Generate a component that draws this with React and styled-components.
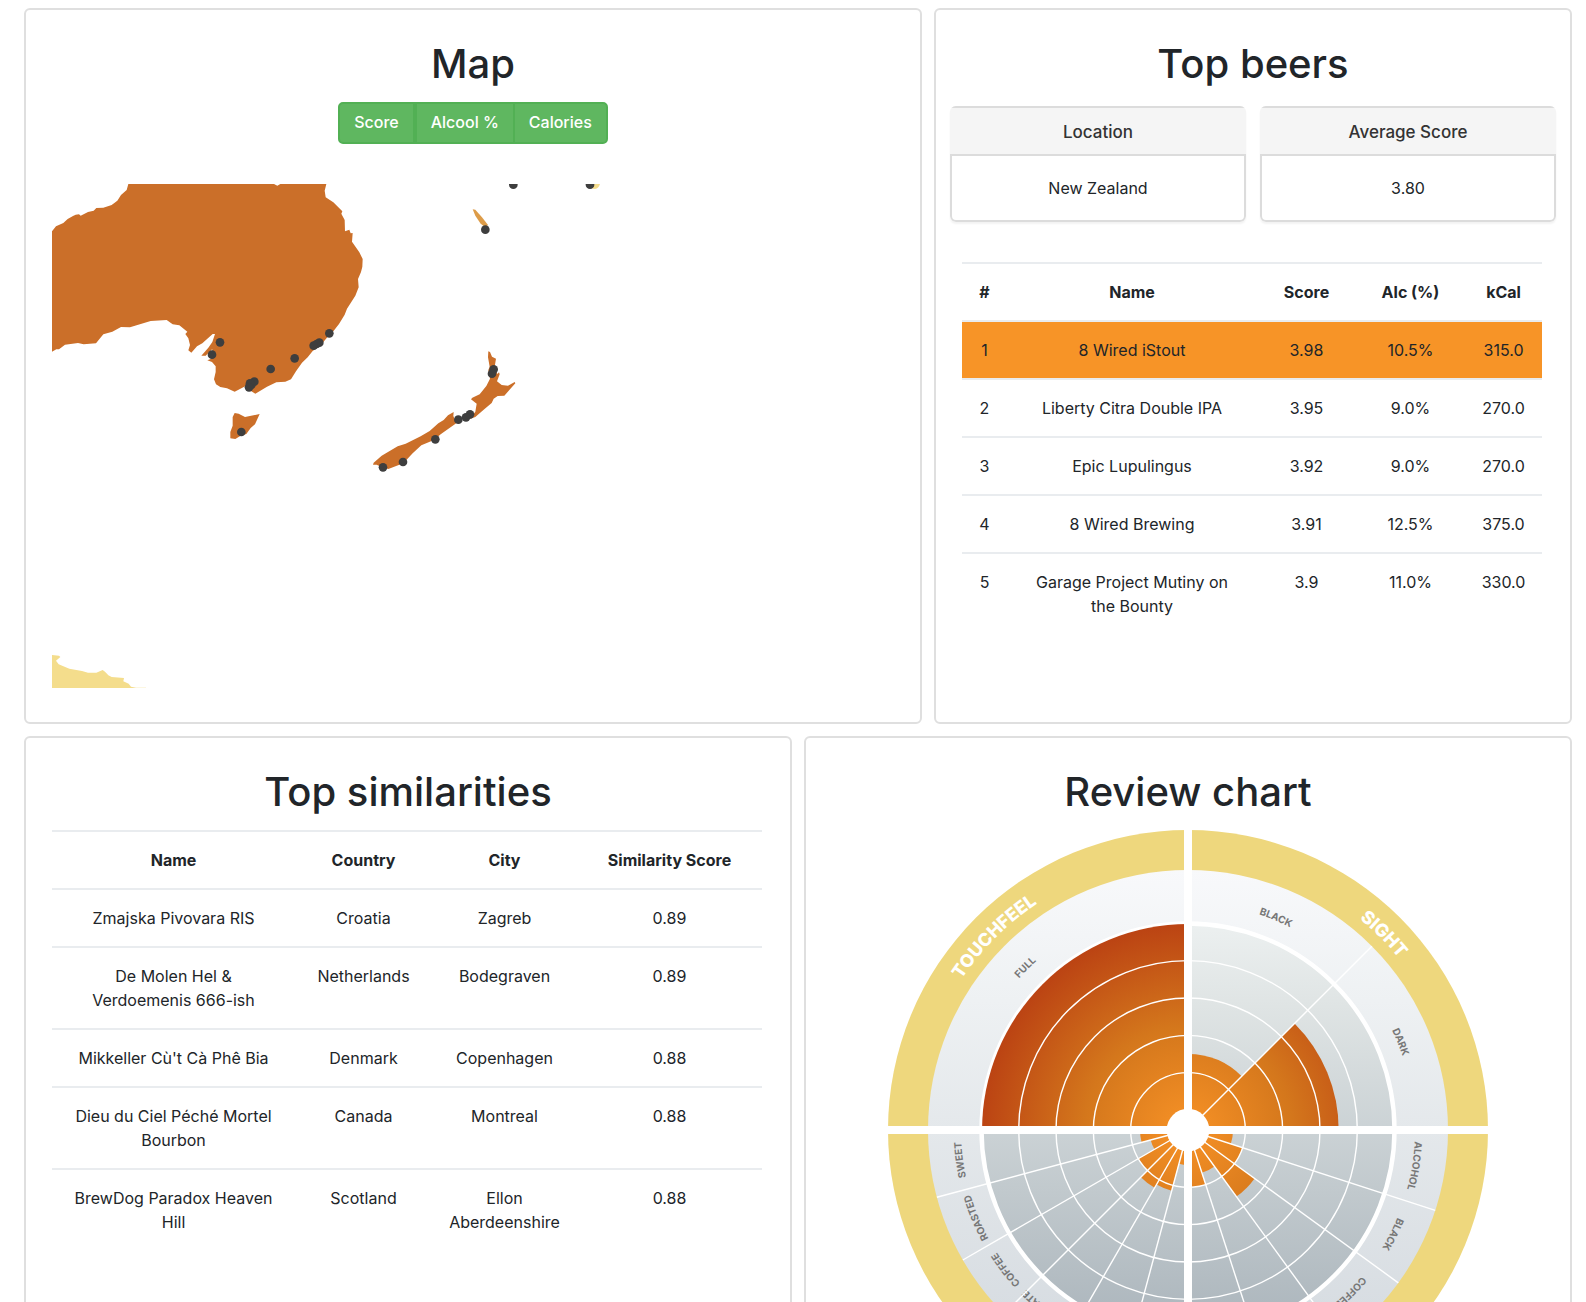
import React from "react";
import styled, { createGlobalStyle } from "styled-components";

const GlobalStyle = createGlobalStyle`
  *, *::before, *::after { box-sizing: border-box; }
  body {
    margin: 0;
    background: #fff;
    color: #212529;
    font-family: Inter, "Liberation Sans", sans-serif;
    font-size: 16px;
    line-height: 24px;
  }
`;

const Dashboard = styled.main`
  display: grid;
  grid-template-columns: repeat(12, minmax(0, 1fr));
  gap: 12px;
  padding: 8px 14px 12px 24px;
`;

const Panel = styled.section`
  grid-column: span ${(p) => p.$span};
  border: 2px solid #dfdfdf;
  border-radius: 6px;
  padding: 30px 0 34px;
`;

const Title = styled.h2`
  margin: 0 0 14px;
  font-size: 40px;
  font-weight: 500;
  line-height: 48px;
  text-align: center;
`;

const Content = styled.div`
  padding: 0 28px 0 26px;
`;

const ButtonGroup = styled.div`
  display: flex;
  justify-content: center;
  margin-bottom: 40px;
`;

const GroupButton = styled.button`
  height: 42px;
  padding: 0 14px 2px;
  border: 2px solid #52b054;
  background: #5fb760;
  color: #fff;
  font: inherit;
  font-weight: 500;
  cursor: pointer;

  &:first-child { border-radius: 5px 0 0 5px; }
  &:last-child { border-radius: 0 5px 5px 0; margin-left: -2px; }
`;

const MapDrawing = styled.svg`
  display: block;
  width: 100%;
  height: auto;
`;

const Cards = styled.div`
  display: grid;
  grid-template-columns: 1fr 1fr;
  gap: 14px;
  padding: 4px 14px 0;
  margin-bottom: 40px;
`;

const Card = styled.div`
  border-radius: 6px;
  background: #f5f5f5;
  box-shadow: 0 2px 2px rgba(0, 0, 0, 0.05);
  text-align: center;
  overflow: hidden;
`;

const CardHeader = styled.h3`
  margin: 0;
  padding: 12px 8px 10px;
  border-top: 2px solid #dcdcdc;
  color: #333;
  font-size: 17px;
  font-weight: 500;
  line-height: 24px;
`;

const CardBody = styled.p`
  margin: 0;
  padding: 20px 8px;
  border: 2px solid #dcdcdc;
  border-radius: 0 0 6px 6px;
  background: #fff;
`;

const Table = styled.table`
  width: 100%;
  table-layout: fixed;
  border-collapse: separate;
  border-spacing: 0;
  text-align: center;
`;

const Column = styled.col`
  width: ${(p) => (p.$width ? `${p.$width}px` : "auto")};
`;

const HeadCell = styled.th`
  padding: 16px 0;
  border-top: 2px solid #e9ecef;
  border-bottom: 2px solid #e9ecef;
  font-weight: 700;
`;

const Row = styled.tr`
  background: ${(p) => (p.$active ? "#f79427" : "transparent")};
`;

const Cell = styled.td`
  padding: 16px ${(p) => (p.$wide ? 20 : 8)}px;
  border-bottom: 2px solid #e9ecef;
  vertical-align: top;

  ${Row}:last-child & { border-bottom: 0; }
`;

const Chart = styled.svg`
  display: block;
  width: 100%;
  max-width: 600px;
  height: auto;
  margin: 0 auto;
`;

const SectorName = styled.text`
  fill: #fff;
  font-size: 18px;
  font-weight: 800;
  text-anchor: middle;
`;

const FlavourName = styled.text`
  fill: #777;
  font-size: 10px;
  font-weight: 700;
  text-anchor: middle;
`;

const beerColumns = [
  { label: "#", width: 45 },
  { label: "Name", wide: true },
  { label: "Score", width: 99 },
  { label: "Alc (%)", width: 109 },
  { label: "kCal", width: 77 },
];

const beers = [
  ["1", "8 Wired iStout", "3.98", "10.5%", "315.0"],
  ["2", "Liberty Citra Double IPA", "3.95", "9.0%", "270.0"],
  ["3", "Epic Lupulingus", "3.92", "9.0%", "270.0"],
  ["4", "8 Wired Brewing", "3.91", "12.5%", "375.0"],
  ["5", "Garage Project Mutiny on the Bounty", "3.9", "11.0%", "330.0"],
];

const similarityColumns = [
  { label: "Name", wide: true },
  { label: "Country", width: 137 },
  { label: "City", width: 145 },
  { label: "Similarity Score", width: 185 },
];

const similarities = [
  ["Zmajska Pivovara RIS", "Croatia", "Zagreb", "0.89"],
  ["De Molen Hel & Verdoemenis 666-ish", "Netherlands", "Bodegraven", "0.89"],
  ["Mikkeller Cù't Cà Phê Bia", "Denmark", "Copenhagen", "0.88"],
  ["Dieu du Ciel Péché Mortel Bourbon", "Canada", "Montreal", "0.88"],
  ["BrewDog Paradox Heaven Hill", "Scotland", "Ellon Aberdeenshire", "0.88"],
];

function DataTable({ columns, rows, activeIndex }) {
  return (
    <Table>
      <colgroup>
        {columns.map((c) => (
          <Column key={c.label} $width={c.width} />
        ))}
      </colgroup>
      <thead>
        <tr>
          {columns.map((c) => (
            <HeadCell key={c.label} scope="col">{c.label}</HeadCell>
          ))}
        </tr>
      </thead>
      <tbody>
        {rows.map((row, i) => (
          <Row key={row[0]} $active={i === activeIndex}>
            {row.map((value, j) => (
              <Cell key={columns[j].label} $wide={columns[j].wide}>{value}</Cell>
            ))}
          </Row>
        ))}
      </tbody>
    </Table>
  );
}

const australia =
  "M36 184L48 169L70 159L83 147L99 138L107 134L117 133L122 137L144 126L161 122L169 114L190 113L215 105L232 92L243 75L260 60L265 42L702 42L712 47L721 42L859 42L854 62L857 82L880 97L907 124L904 131L914 150L915 184L928 179L932 190L938 189L936 215L958 247L968 267L967 290L963 306L954 327L956 352L946 377L921 416L914 434L897 462L880 484L862 502L840 528L818 543L803 562L786 578L768 604L753 628L736 635L709 637L681 650L646 671L634 664L625 655L617 648L584 665L561 655L541 651L528 643L522 628L527 606L527 589L516 576L502 571L514 566L517 537L497 557L484 557L505 533L517 516L525 492L518 492L487 520L471 529L454 548L445 541L450 525L445 505L436 492L442 485L418 466L398 463L380 450L332 453L270 472L243 471L217 485L190 493L168 520L131 523L114 519L75 524L57 538L49 538L36 545Z";

const tasmania =
  "M584 729L596 731L615 741L659 732L645 763L632 774L619 792L602 797L586 807L571 805L571 786L578 767L578 741Z";

const newZealand = [
  "M385 544L390 546L396 560L408 566L404 590L412 612L417 607L419 613L411 634L425 645L444 647L464 636L466 640L433 677L413 678L401 686L395 699L371 719L346 741L328 748L346 725L350 701L333 688L337 683L359 673L379 648L390 626L385 600L389 590L384 562Z",
  "M281 726L280 738L284 748L294 756L242 793L222 810L184 826L158 850L130 880L85 897L66 892L50 884L39 884L41 878L65 857L113 829L137 821L182 799L209 783L235 760L251 750L264 736Z",
];

const antarctica =
  "M156 45L177 47L181 51L168 62L176 73L208 86L246 93L264 98L289 98L308 90L315 95L325 106L335 111L372 114L370 124L386 131L393 140L408 143L438 143V144H156Z";

const breweries = [
  [540, 517], [516, 554], [868, 490], [838, 518], [830, 522], [821, 527],
  [764, 565], [692, 597], [643, 635], [630, 640], [634, 645], [627, 652], [604, 786],
  [1420, 44], [1650, 44], [1336, 179],
  [1361, 598], [1356, 611], [1290, 733], [1278, 742], [1255, 749],
  [1186, 808], [1089, 876], [1029, 892],
];

function BreweryMap() {
  return (
    <MapDrawing viewBox="36 42 2520 1512" role="img" aria-label="Breweries by country">
      <g fill="#cb6f29">
        <path d={australia} />
        <path d={tasmania} />
        <g transform="translate(960 0)">
          {newZealand.map((d) => (
            <path key={d} d={d} />
          ))}
        </g>
      </g>
      <path
        d="M338 118L346 119L366 142L384 165L376 172L362 161L346 137Z"
        transform="translate(960 0)"
        fill="#dd9c48"
      />
      <path d="M1650 42H1680Q1676 57 1662 57L1650 54Z" fill="#f5dd8d" />
      <path d={antarctica} transform="translate(-120 1410)" fill="#f4dd8c" />
      {breweries.map(([x, y]) => (
        <circle key={`${x}-${y}`} cx={x} cy={y} r="13" fill="#3e3e3e" />
      ))}
    </MapDrawing>
  );
}

// Angles are in degrees, clockwise, starting from the bottom of the wheel.
const sectors = [
  {
    start: 0,
    values: [0.4, 1.15, 1.25, 1, 0.5, 0.75],
    labels: ["", "", "CHOCOLATE", "COFFEE", "ROASTED", "SWEET"],
  },
  { name: "TOUCHFEEL", start: 90, values: [4.98], labels: ["FULL"] },
  { name: "SIGHT", start: 180, values: [1.5, 3.5], labels: ["BLACK", "DARK"] },
  {
    start: 270,
    values: [0.67, 1, 1.67, 0.67, 1],
    labels: ["ALCOHOL", "BLACK", "COFFEE", "", ""],
  },
];

const HUB = 20;
const STEP = 112 / 3;

const radiusOf = (value) => HUB + value * STEP;

const pointAt = (angle, radius) => {
  const a = (angle * Math.PI) / 180;
  return [300 - radius * Math.sin(a), 300 + radius * Math.cos(a)];
};

const wedge = (from, to, radius) => {
  const [x1, y1] = pointAt(from, radius);
  const [x2, y2] = pointAt(to, radius);
  return `M300 300L${x1} ${y1}A${radius} ${radius} 0 0 1 ${x2} ${y2}Z`;
};

const circlePath = (r) =>
  `M300 ${300 + r}A${r} ${r} 0 0 1 300 ${300 - r}A${r} ${r} 0 0 1 300 ${300 + r}`;

const slices = sectors.flatMap((s) => {
  const size = 90 / s.values.length;
  return s.values.map((value, i) => ({
    value,
    label: s.labels[i],
    from: s.start + i * size,
    to: s.start + (i + 1) * size,
  }));
});

function ReviewChart() {
  return (
    <Chart viewBox="0 0 600 600" role="img" aria-label="Review chart">
      <defs>
        <linearGradient id="ring" gradientUnits="userSpaceOnUse" x1="0" y1="40" x2="0" y2="560">
          <stop offset="0" stopColor="#f8f9fb" />
          <stop offset="0.25" stopColor="#eef1f3" />
          <stop offset="0.5" stopColor="#e4e8eb" />
          <stop offset="1" stopColor="#d2d8de" />
        </linearGradient>
        <linearGradient id="disc" gradientUnits="userSpaceOnUse" x1="0" y1="94" x2="0" y2="506">
          <stop offset="0" stopColor="#ecf0f0" />
          <stop offset="0.2" stopColor="#dfe4e4" />
          <stop offset="0.5" stopColor="#cbd2d5" />
          <stop offset="0.65" stopColor="#c1c9cd" />
          <stop offset="1" stopColor="#aab4bb" />
        </linearGradient>
        <radialGradient id="heat" gradientUnits="userSpaceOnUse" cx="300" cy="300" r="207">
          <stop offset="0" stopColor="#f79226" />
          <stop offset="0.5" stopColor="#d4771c" />
          <stop offset="1" stopColor="#bb4313" />
        </radialGradient>
        <path id="sectorArc" d={circlePath(272)} />
        <path id="flavourArc" d={circlePath(227)} />
      </defs>

      <circle cx="300" cy="300" r="300" fill="#eed77d" />
      <circle cx="300" cy="300" r="260" fill="url(#ring)" />
      <circle cx="300" cy="300" r="206.5" fill="url(#disc)" stroke="#fff" strokeWidth="4.4" />

      {slices.map((s) => (
        <path key={s.from} d={wedge(s.from, s.to, radiusOf(s.value))} fill="url(#heat)" />
      ))}

      {sectors.filter((s) => s.name).map((s) => (
        <SectorName key={s.name}>
          <textPath href="#sectorArc" startOffset={`${((s.start + 45) / 360) * 100}%`}>
            {s.name}
          </textPath>
        </SectorName>
      ))}
      {slices.filter((s) => s.label).map((s) => (
        <FlavourName key={s.from}>
          <textPath href="#flavourArc" startOffset={`${((s.from + s.to) / 720) * 100}%`}>
            {s.label}
          </textPath>
        </FlavourName>
      ))}

      <g fill="none" stroke="#fff" strokeWidth="1.4">
        {[1, 2, 3, 4].map((n) => (
          <circle key={n} cx="300" cy="300" r={radiusOf(n)} />
        ))}
        {slices.map((s) => {
          const [x, y] = pointAt(s.from, 260);
          return <line key={s.from} x1="300" y1="300" x2={x} y2={y} />;
        })}
      </g>

      <path d="M300 0V600M0 300H600" stroke="#fff" strokeWidth="8" />
      <circle cx="300" cy="300" r="21.3" fill="#fff" />
    </Chart>
  );
}

export default function App() {
  return (
    <>
      <GlobalStyle />
      <Dashboard>
        <Panel $span={7}>
          <Title>Map</Title>
          <ButtonGroup role="group" aria-label="Map measure">
            <GroupButton type="button">Score</GroupButton>
            <GroupButton type="button">Alcool %</GroupButton>
            <GroupButton type="button">Calories</GroupButton>
          </ButtonGroup>
          <Content>
            <BreweryMap />
          </Content>
        </Panel>

        <Panel $span={5}>
          <Title>Top beers</Title>
          <Cards>
            <Card>
              <CardHeader>Location</CardHeader>
              <CardBody>New Zealand</CardBody>
            </Card>
            <Card>
              <CardHeader>Average Score</CardHeader>
              <CardBody>3.80</CardBody>
            </Card>
          </Cards>
          <Content>
            <DataTable columns={beerColumns} rows={beers} activeIndex={0} />
          </Content>
        </Panel>

        <Panel $span={6}>
          <Title>Top similarities</Title>
          <Content>
            <DataTable columns={similarityColumns} rows={similarities} />
          </Content>
        </Panel>

        <Panel $span={6}>
          <Title>Review chart</Title>
          <ReviewChart />
        </Panel>
      </Dashboard>
    </>
  );
}
